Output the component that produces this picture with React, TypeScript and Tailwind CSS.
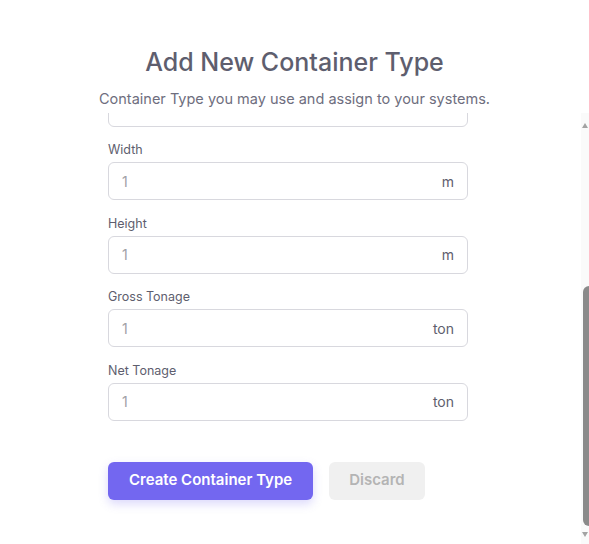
import { useEffect, useRef } from "react";

type Campo = {
  etiqueta: string;
  valor: string;
  unidad?: string;
};

const campos: Campo[] = [
  { etiqueta: "Container Type Name", valor: "" },
  { etiqueta: "Code", valor: "" },
  { etiqueta: "Description", valor: "" },
  { etiqueta: "Length", valor: "1", unidad: "m" },
  { etiqueta: "Width", valor: "1", unidad: "m" },
  { etiqueta: "Height", valor: "1", unidad: "m" },
  { etiqueta: "Gross Tonage", valor: "1", unidad: "ton" },
  { etiqueta: "Net Tonage", valor: "1", unidad: "ton" },
];

function CampoNumero({ etiqueta, valor, unidad }: Campo) {
  return (
    <label className="flex flex-col">
      <span className="mb-0.5 text-[12.5px] leading-5 text-[#5e5e6e]">
        {etiqueta}
      </span>
      <div className="flex h-[38px] items-center rounded-md border border-[#d8d8de] bg-white px-[13px]">
        <input
          defaultValue={valor}
          className="min-w-0 flex-1 bg-transparent text-[14px] text-[#a0a0a6] outline-none"
        />
        {unidad && (
          <span className="text-[14px] text-[#5e5e6e]">{unidad}</span>
        )}
      </div>
    </label>
  );
}

// barra de scroll dibujada (la real no sale en la captura)
function BarraScroll() {
  return (
    <div className="pointer-events-none absolute inset-y-0 right-0 flex w-[8px] flex-col items-end bg-[#fafafa]">
      <div className="mt-[10px] mr-[1px] h-0 w-0 border-x-[3px] border-b-[5px] border-x-transparent border-b-[#a3a3a3]" />
      <div className="mt-[158px] h-[240px] w-[6px] rounded-l-full bg-[#8a8a8a]" />
      <div className="mt-[6px] mr-[1px] h-0 w-0 border-x-[3px] border-t-[5px] border-x-transparent border-t-[#a3a3a3]" />
    </div>
  );
}

export default function App() {
  const scrollRef = useRef<HTMLDivElement>(null);

  useEffect(() => {
    const el = scrollRef.current;
    if (el) el.scrollTop = el.scrollHeight;
  }, []);

  return (
    <div
      className="flex h-[544px] flex-col bg-white"
      style={{ fontFamily: "Inter, 'Noto Sans', sans-serif" }}
    >
      <header className="flex flex-col items-center pt-[46px] pb-[4px]">
        <h2 className="text-[25px] font-medium leading-8 text-[#5e5e6e]">
          Add New Container Type
        </h2>
        <p className="mt-[11px] text-[14.5px] leading-5 text-[#6e6e7e]">
          Container Type you may use and assign to your systems.
        </p>
      </header>

      <div className="relative min-h-0 flex-1">
        <div
          ref={scrollRef}
          className="h-full overflow-y-auto [scrollbar-width:none]"
        >
          <div className="flex justify-center pr-[13px] pt-[25px] pb-[44px]">
            <form className="flex w-[360px] flex-col">
              <div className="flex flex-col gap-[13.5px]">
                {campos.map((c) => (
                  <CampoNumero key={c.etiqueta} {...c} />
                ))}
              </div>

              <div className="mt-[41px] flex gap-4">
                <button
                  type="button"
                  className="h-[38px] rounded-md bg-[#7367f0] px-[21px] text-[15px] font-semibold text-white shadow-[0_4px_10px_rgba(115,103,240,0.25)]"
                >
                  Create Container Type
                </button>
                <button
                  type="button"
                  className="h-[38px] rounded-md bg-[#f0f0f0] px-[20px] text-[15px] font-semibold text-[#b4b4b4]"
                >
                  Discard
                </button>
              </div>
            </form>
          </div>
        </div>
        <BarraScroll />
      </div>
    </div>
  );
}
